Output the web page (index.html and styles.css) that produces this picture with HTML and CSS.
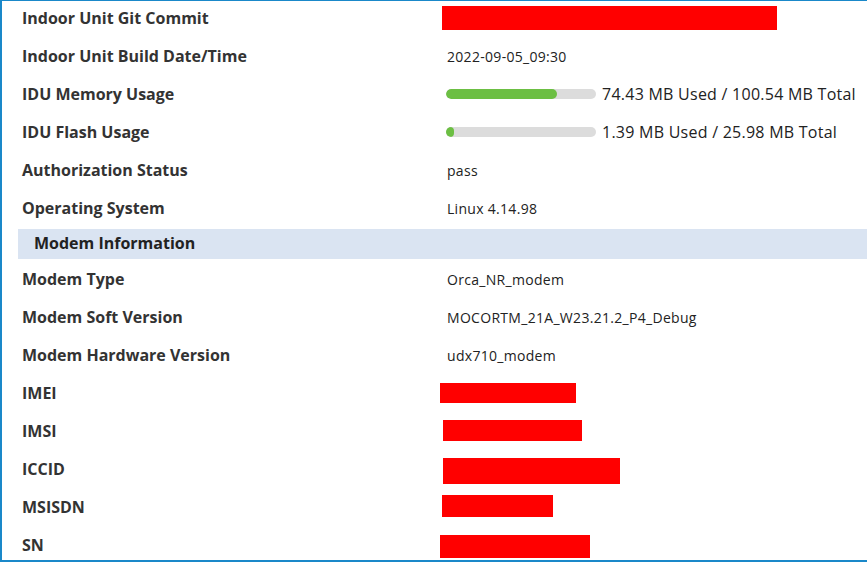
FILE: index.html
```html
<!DOCTYPE html>
<html lang="en">
<head>
    <meta charset="UTF-8">
    <meta name="viewport" content="width=device-width, initial-scale=1.0">
    <title>Device Information</title>
    <link rel="stylesheet" href="styles.css">
</head>
<body>
    <div class="panel">
        <div class="info-table">
            <div class="row">
                <div class="label">Indoor Unit Git Commit</div>
                <div class="value"><span class="redact r-commit"></span></div>
            </div>
            <div class="row">
                <div class="label">Indoor Unit Build Date/Time</div>
                <div class="value">2022-09-05_09:30</div>
            </div>
            <div class="row">
                <div class="label">IDU Memory Usage</div>
                <div class="value">
                    <div class="usage">
                        <div class="bar"><div class="fill" style="width: 74%;"></div></div>
                        <span class="usage-text">74.43 MB Used / 100.54 MB Total</span>
                    </div>
                </div>
            </div>
            <div class="row">
                <div class="label">IDU Flash Usage</div>
                <div class="value">
                    <div class="usage">
                        <div class="bar"><div class="fill" style="width: 5.4%;"></div></div>
                        <span class="usage-text">1.39 MB Used / 25.98 MB Total</span>
                    </div>
                </div>
            </div>
            <div class="row">
                <div class="label">Authorization Status</div>
                <div class="value">pass</div>
            </div>
            <div class="row">
                <div class="label">Operating System</div>
                <div class="value">Linux 4.14.98</div>
            </div>

            <!-- 模组信息 -->
            <div class="section-head">Modem Information</div>

            <div class="row">
                <div class="label">Modem Type</div>
                <div class="value">Orca_NR_modem</div>
            </div>
            <div class="row">
                <div class="label">Modem Soft Version</div>
                <div class="value">MOCORTM_21A_W23.21.2_P4_Debug</div>
            </div>
            <div class="row">
                <div class="label">Modem Hardware Version</div>
                <div class="value">udx710_modem</div>
            </div>
            <div class="row">
                <div class="label">IMEI</div>
                <div class="value"><span class="redact r-imei"></span></div>
            </div>
            <div class="row">
                <div class="label">IMSI</div>
                <div class="value"><span class="redact r-imsi"></span></div>
            </div>
            <div class="row">
                <div class="label">ICCID</div>
                <div class="value"><span class="redact r-iccid"></span></div>
            </div>
            <div class="row">
                <div class="label">MSISDN</div>
                <div class="value"><span class="redact r-msisdn"></span></div>
            </div>
            <div class="row">
                <div class="label">SN</div>
                <div class="value"><span class="redact r-sn"></span></div>
            </div>
        </div>
    </div>
</body>
</html>
```

FILE: styles.css
```css
body {
    margin: 0;
    background-color: #fff;
    font-family: "Open Sans", "Noto Sans", Arial, sans-serif;
    color: #222;
}
.panel {
    height: 562px;
    box-sizing: border-box;
    overflow: hidden;
    border-left: 2px solid #1a88c9;
    border-bottom: 2px solid #1a88c9;
    box-shadow: inset 0 1px 0 #1a88c9;
    padding-left: 16px;
}
.row {
    display: grid;
    grid-template-columns: 429px 1fr;
    height: 38px;
    align-items: center;
}
.label {
    padding-left: 4px;
    padding-bottom: 2px;
    font-size: 16px;
    font-weight: 700;
    color: #333;
    white-space: nowrap;
}
.value {
    position: relative;
    height: 38px;
    box-sizing: border-box;
    padding-bottom: 2px;
    display: flex;
    align-items: center;
    font-size: 14px;
    letter-spacing: 0.3px;
    white-space: nowrap;
}
/* 分组标题 */
.section-head {
    margin: 1px 0 2px 0;
    height: 30px;
    line-height: 29px;
    padding-left: 16px;
    background-color: #dae4f2;
    font-size: 16px;
    font-weight: 700;
    color: #222;
}
.usage {
    display: flex;
    align-items: center;
    margin-left: -1px;
}
.bar {
    width: 150px;
    height: 10px;
    border-radius: 5px;
    background-color: #dcdcdc;
    overflow: hidden;
}
.fill {
    height: 100%;
    min-width: 8px;
    border-radius: 5px;
    background-color: #6cbf43;
}
.usage-text {
    margin-left: 6px;
    font-size: 16px;
    letter-spacing: 0.25px;
}
/* 遮挡的敏感信息 */
.redact {
    position: absolute;
    background-color: #ff0000;
}
.r-commit { left: -5px; top: 6px; width: 335px; height: 24px; }
.r-imei { left: -7px; top: 8px; width: 136px; height: 20px; }
.r-imsi { left: -4px; top: 7px; width: 139px; height: 21px; }
.r-iccid { left: -4px; top: 7px; width: 177px; height: 26px; }
.r-msisdn { left: -5px; top: 6px; width: 111px; height: 22px; }
.r-sn { left: -7px; top: 8px; width: 150px; height: 23px; }
```
